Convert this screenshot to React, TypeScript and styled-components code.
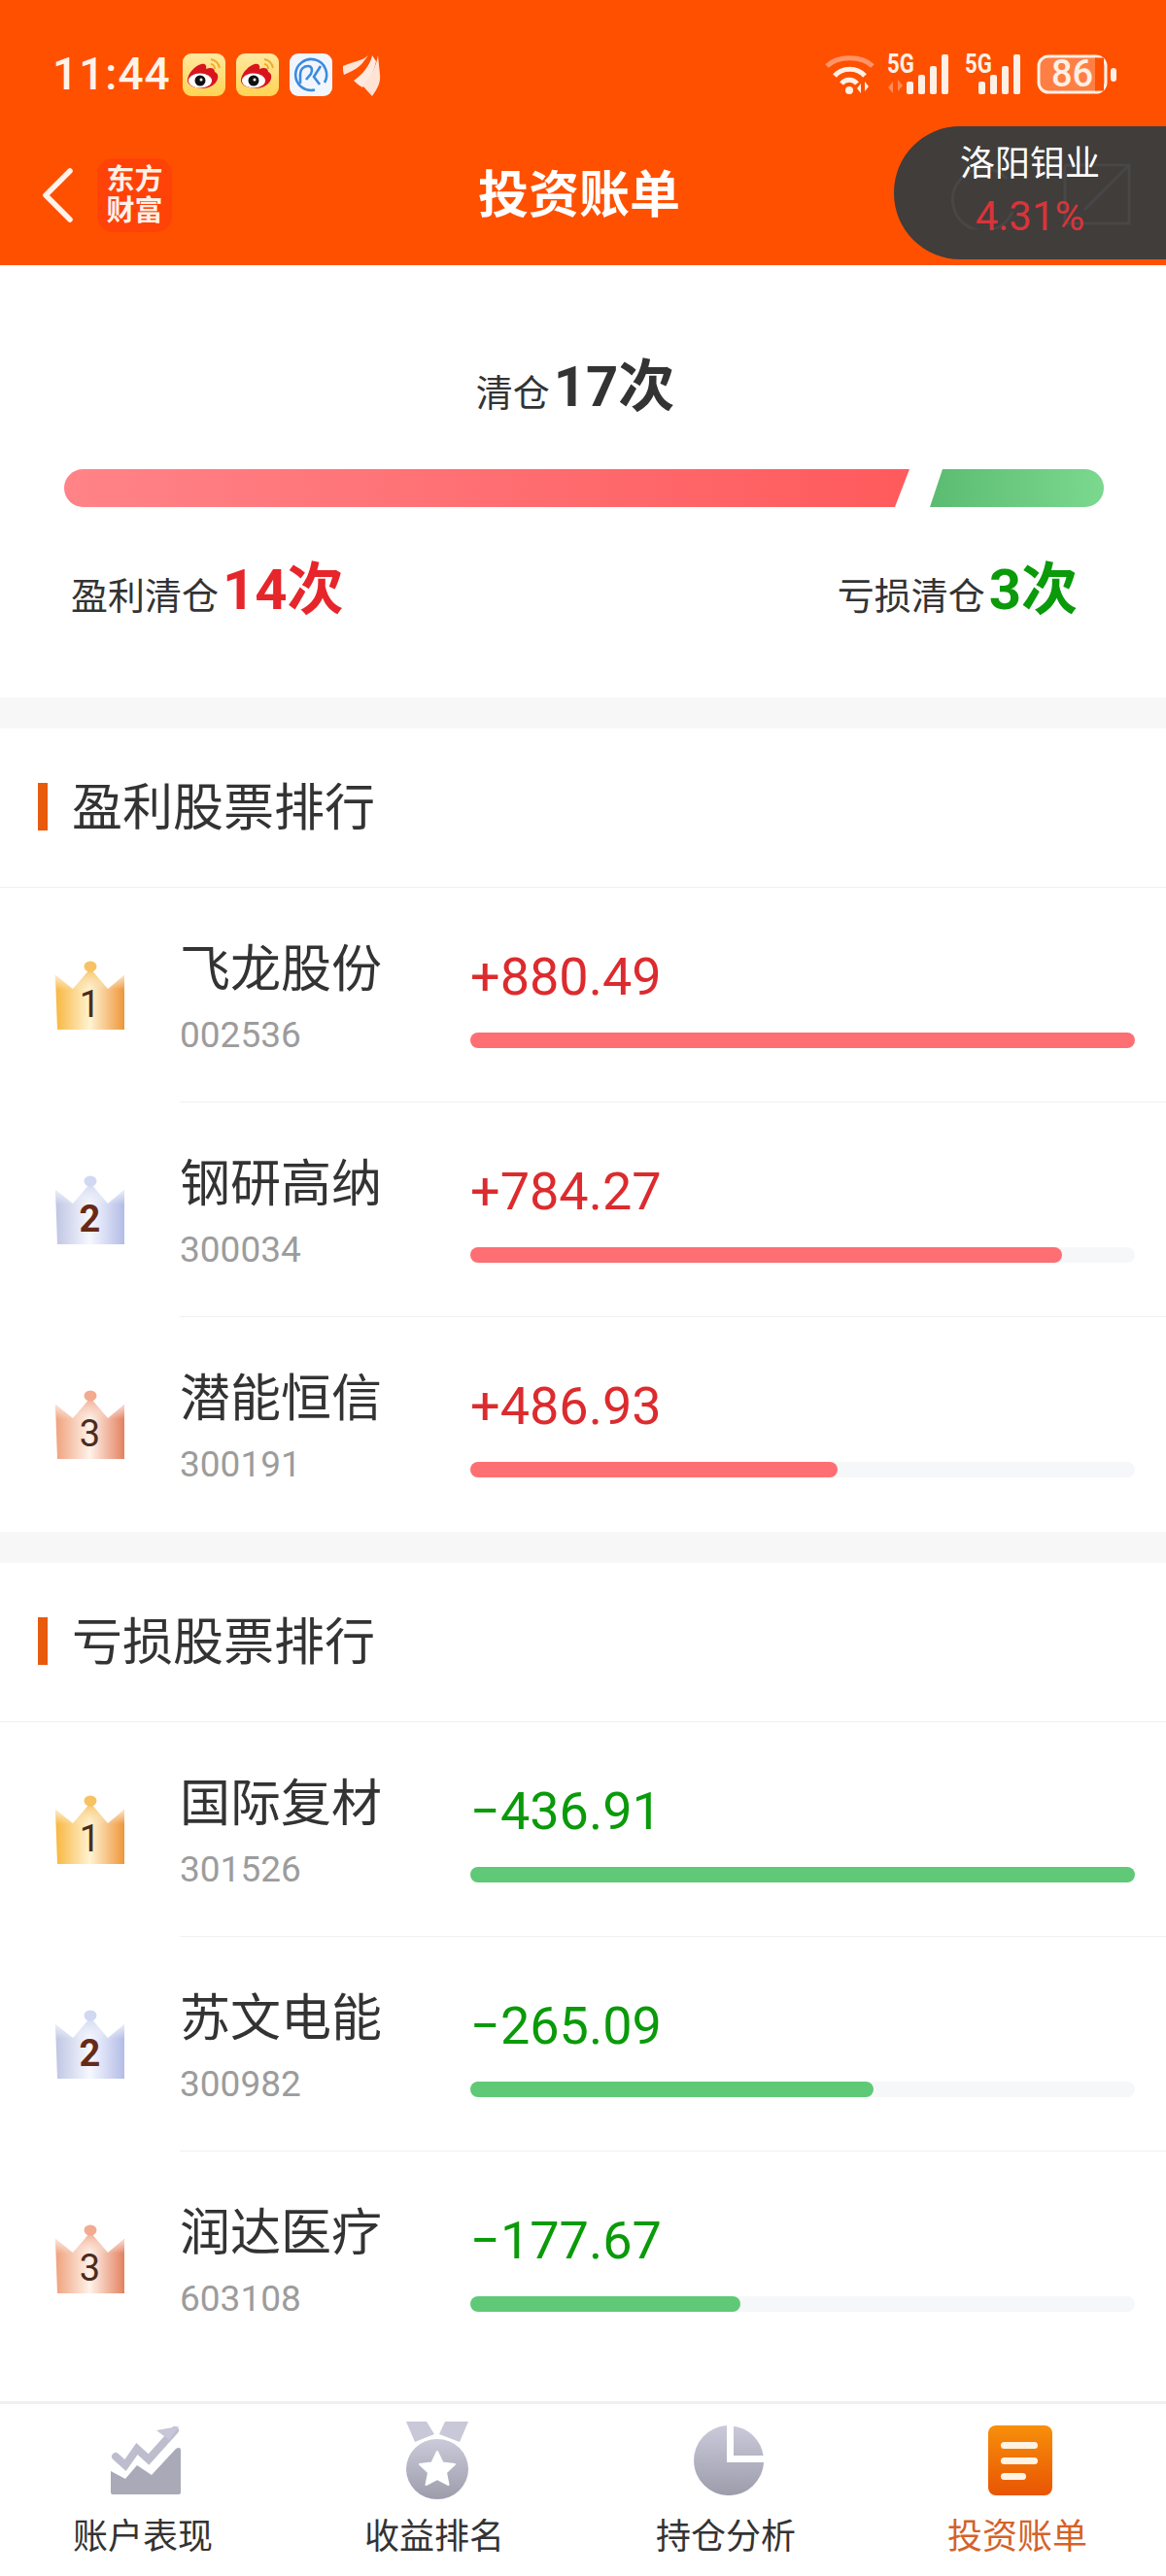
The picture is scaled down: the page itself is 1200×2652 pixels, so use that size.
import React from 'react';
import styled, { createGlobalStyle } from 'styled-components';

const FONT = 'Roboto, "Noto Sans CJK SC", sans-serif';

const GlobalStyle = createGlobalStyle`
  html, body {
    margin: 0;
    padding: 0;
    background: #ffffff;
  }
  * {
    box-sizing: border-box;
  }
`;

const Page = styled.div`
  position: relative;
  display: flex;
  flex-direction: column;
  width: 1200px;
  height: 2652px;
  overflow: hidden;
  background: #ffffff;
  color: #333333;
  font-family: ${FONT};
`;

const Header = styled.header`
  position: relative;
  flex: none;
  height: 273px;
  background: #ff5000;
`;

const StatusBar = styled.div`
  display: flex;
  align-items: flex-start;
  height: 130px;
  padding: 55px 51px 0 54px;
`;

const Time = styled.span`
  width: 134px;
  margin-top: -2px;
  color: #fff2e8;
  font-size: 46px;
  font-weight: 500;
  line-height: 46px;
  letter-spacing: 1px;
`;

const NotifyIcons = styled.div`
  display: flex;
  gap: 11px;
`;

const StatusIcons = styled.div`
  display: flex;
  align-items: flex-start;
  gap: 13px;
  margin-left: auto;
  margin-top: 1px;
`;

const SignalBox = styled.div`
  position: relative;
  height: 41px;
`;

const NetworkMark = styled.span`
  position: absolute;
  left: 0;
  top: 0;
  color: #fff0e6;
  font-size: 27px;
  font-weight: 700;
  line-height: 20px;
  transform: scaleX(0.82);
  transform-origin: left center;
`;

const BatteryBox = styled.div`
  position: relative;
  width: 82px;
  height: 41px;
`;

const BatteryLevel = styled.span`
  position: absolute;
  left: 2px;
  width: 69px;
  top: 0;
  color: #fff0e6;
  font-size: 38px;
  font-weight: 500;
  line-height: 41px;
  text-align: center;
`;

const NavBar = styled.div`
  position: relative;
  display: flex;
  align-items: center;
  height: 142px;
  padding-left: 43px;
`;

const AppLogo = styled.div`
  display: flex;
  flex-direction: column;
  align-items: center;
  justify-content: center;
  width: 77px;
  height: 76px;
  margin-left: 25px;
  border-radius: 16px;
  background: #ff4208;
  color: #fff1e8;
  font-size: 29px;
  font-weight: 700;
  line-height: 32px;
`;

const NavTitle = styled.h1`
  position: absolute;
  left: 492px;
  top: 42px;
  margin: 0;
  color: #ffffff;
  font-size: 52px;
  font-weight: 700;
  line-height: 60px;
`;

const FloatPill = styled.div`
  position: absolute;
  right: 0;
  top: 130px;
  display: flex;
  flex-direction: column;
  align-items: center;
  width: 280px;
  height: 137px;
  padding-top: 15px;
  border-radius: 68px 0 0 68px;
  background: #403d3b;
`;

const PillGhost = styled.svg`
  position: absolute;
  left: 56px;
  top: 36px;
`;

const PillName = styled.span`
  position: relative;
  color: #ffffff;
  font-size: 36px;
  line-height: 48px;
`;

const PillRate = styled.span`
  position: relative;
  margin-top: 6px;
  color: #d9343a;
  font-size: 42px;
  line-height: 48px;
`;

const Summary = styled.section`
  flex: none;
  height: 445px;
  padding-top: 90px;
`;

const SummaryTitle = styled.div`
  display: flex;
  justify-content: center;
  align-items: baseline;
  height: 70px;
  padding-right: 16px;
  line-height: 70px;
`;

const Label = styled.span`
  color: #333333;
  font-size: 38px;
`;

const Count = styled.strong<{ $tone: 'dark' | 'up' | 'down' }>`
  margin-left: 4px;
  color: ${(p) =>
    p.$tone === 'up' ? '#e6262a' : p.$tone === 'down' ? '#0a9a0a' : '#333333'};
  font-size: 58px;
  font-weight: 700;
`;

const RatioBar = styled.div`
  display: flex;
  height: 39px;
  margin: 50px 64px 0 66px;
`;

const RatioUp = styled.div`
  width: 870px;
  border-radius: 20px 0 0 20px;
  background: linear-gradient(90deg, #ff8388, #ff5a5c);
  clip-path: polygon(0 0, 100% 0, calc(100% - 15px) 100%, 0 100%);
`;

const RatioDown = styled.div`
  width: 179px;
  margin-left: 21px;
  border-radius: 0 20px 20px 0;
  background: linear-gradient(90deg, #5bbc71, #7bd88f);
  clip-path: polygon(13px 0, 100% 0, 100% 100%, 0 100%);
`;

const SummaryFoot = styled.div`
  display: flex;
  justify-content: space-between;
  align-items: baseline;
  height: 70px;
  margin-top: 50px;
  padding: 0 91px 0 73px;
  line-height: 70px;
`;

const FootItem = styled.div`
  display: flex;
  align-items: baseline;
`;

const Band = styled.div`
  flex: none;
  height: 32px;
  background: #f7f7f7;
`;

const SectionHead = styled.div`
  display: flex;
  align-items: center;
  height: 164px;
  padding: 0 0 2px 39px;
  border-bottom: 1px solid #f0f0f0;
`;

const Accent = styled.i`
  width: 10px;
  height: 49px;
  background: #e85a0c;
`;

const SectionTitle = styled.h2`
  margin: 5px 0 0 25px;
  color: #333333;
  font-size: 52px;
  font-weight: 400;
  line-height: 60px;
`;

const Row = styled.div`
  display: flex;
  height: 221px;
`;

const CrownBox = styled.div`
  position: relative;
  flex: none;
  width: 71px;
  height: 71px;
  margin: 75px 0 0 57px;
`;

const CrownNumber = styled.span<{ $rank: number }>`
  position: absolute;
  left: 0;
  right: 0;
  top: 24px;
  color: ${(p) => (p.$rank === 2 ? '#672a18' : '#4c2c20')};
  font-size: 38px;
  font-weight: ${(p) => (p.$rank === 2 ? 700 : 400)};
  line-height: 42px;
  text-align: center;
`;

const RowBody = styled.div<{ $last: boolean }>`
  display: flex;
  flex: 1;
  margin-left: 57px;
  padding-right: 32px;
  border-bottom: 1px solid ${(p) => (p.$last ? 'transparent' : '#f0f0f0')};
`;

const StockInfo = styled.div`
  flex: none;
  width: 299px;
  padding-top: 55px;
`;

const StockName = styled.div`
  color: #333333;
  font-size: 52px;
  line-height: 60px;
`;

const StockCode = styled.div`
  margin-top: 15px;
  color: #9c9c9c;
  font-size: 37px;
  line-height: 44px;
`;

const StockResult = styled.div`
  flex: 1;
  padding-top: 62px;
`;

const Amount = styled.div<{ $up: boolean }>`
  color: ${(p) => (p.$up ? '#dc2b2e' : '#0a9a0a')};
  font-size: 54px;
  line-height: 60px;
`;

const Track = styled.div`
  height: 16px;
  margin-top: 27px;
  border-radius: 8px;
  background: #f6f7f9;
`;

const Fill = styled.div<{ $up: boolean }>`
  height: 100%;
  border-radius: 8px;
  background: ${(p) => (p.$up ? '#fd6f73' : '#5fc977')};
`;

const TabBar = styled.nav`
  display: grid;
  grid-template-columns: repeat(4, 300px);
  flex: none;
  height: 180px;
  margin-top: auto;
  border-top: 3px solid #f0f0f0;
`;

const Tab = styled.div`
  display: flex;
  flex-direction: column;
  align-items: center;
  margin-left: -6px;
`;

const TabIcon = styled.div`
  display: flex;
  align-items: center;
  justify-content: center;
  height: 80px;
  margin: 18px 0 0 6px;
`;

const TabLabel = styled.span<{ $active: boolean }>`
  margin-top: 17px;
  color: ${(p) => (p.$active ? '#d4622a' : '#333333')};
  font-size: 36px;
  line-height: 44px;
`;

function WeiboIcon({ id }: { id: string }): React.ReactElement {
  return (
    <svg width="44" height="44" viewBox="0 0 44 44">
      <defs>
        <linearGradient id={id} x1="0" y1="0" x2="0" y2="1">
          <stop offset="0" stopColor="#ffe9a0" />
          <stop offset="1" stopColor="#ffd454" />
        </linearGradient>
      </defs>
      <rect width="44" height="44" rx="9" fill={`url(#${id})`} />
      <path
        d="M5 28c0-7 7-15 14-17 4-1 6 1 5 5 5-2 9-1 9 3 5 2 4 9-1 13-5 4-12 5-18 3-6-1-9-4-9-7z"
        fill="#d8151f"
      />
      <ellipse cx="18" cy="28" rx="12" ry="7.5" fill="#ffffff" />
      <circle cx="18" cy="28" r="5.5" fill="#111111" />
      <circle cx="19" cy="27" r="1.5" fill="#ffffff" />
      <path d="M29 6c5 1 8 4 9 9M29 11c2 0 4 2 4 5" fill="none" stroke="#efa92b" strokeWidth="2" />
    </svg>
  );
}

function LinkIcon(): React.ReactElement {
  return (
    <svg width="44" height="44" viewBox="0 0 44 44">
      <rect width="44" height="44" rx="9" fill="#f2f6fc" />
      <path d="M26 37.500A16 16 0 1 1 36 30" fill="none" stroke="#3c8be0" strokeWidth="2.600" />
      <path
        d="M11 31V21C11 16 15 13 19 13C23 13 24 17 22 21L17 27"
        fill="none"
        stroke="#3c8be0"
        strokeWidth="2.600"
      />
      <path d="M32 13L25 24L31 32" fill="none" stroke="#3c8be0" strokeWidth="2.600" />
    </svg>
  );
}

function FeatherIcon(): React.ReactElement {
  return (
    <svg width="39" height="44" viewBox="0 0 39 44">
      <path d="M26 2C20 8 8 9 0 13C0 17 0 20 1 22C8 19 16 15 20 10z" fill="#ffe4d6" />
      <path d="M30 2C28 12 20 22 11 28C14 31 17 33 20 35C27 28 32 18 34 8z" fill="#ffeadf" />
      <path d="M36 2C34 14 28 25 20 33C24 37 27 41 30 44C35 37 39 30 38 22z" fill="#ffe4d6" />
    </svg>
  );
}

function WifiIcon(): React.ReactElement {
  return (
    <svg width="51" height="41" viewBox="0 0 51 41">
      <path d="M2 12C13 1 38 1 49 12" fill="none" stroke="#ff9468" strokeWidth="5" />
      <path d="M10 22C18 13 33 13 41 22" fill="none" stroke="#fff0e6" strokeWidth="5" />
      <path d="M17 30C21 25 29 25 33 30" fill="none" stroke="#fff0e6" strokeWidth="5" />
      <circle cx="25" cy="37" r="4" fill="#fff0e6" />
      <path d="M37 40V30l-4 5zM41 28v10l4-5z" fill="#fff0e6" />
    </svg>
  );
}

function SignalIcon({ wide }: { wide: boolean }): React.ReactElement {
  const left = wide ? 20 : 14;
  const width = wide ? 67 : 61;
  const bars = [13, 20, 29, 41];
  return (
    <SignalBox>
      <svg width={width} height="41" viewBox={`0 0 ${width} 41`}>
        {wide && <path d="M6 40V28l-5 6zM11 26v12l5-6z" fill="#ff8a58" />}
        {bars.map((h, index) => (
          <rect key={h} x={left + index * 12} y={41 - h} width="7" height={h} rx="2" fill="#fff0e6" />
        ))}
      </svg>
      <NetworkMark>5G</NetworkMark>
    </SignalBox>
  );
}

function BatteryIcon(): React.ReactElement {
  return (
    <BatteryBox>
      <svg width="82" height="41" viewBox="0 0 82 41">
        <rect x="2" y="2" width="69" height="37" rx="10" fill="#ff7f43" stroke="#fff0e6" strokeWidth="3" />
        <rect x="60" y="3.500" width="9" height="34" fill="#ff5000" />
        <rect x="76" y="14" width="6" height="14" rx="3" fill="#fff0e6" />
      </svg>
      <BatteryLevel>86</BatteryLevel>
    </BatteryBox>
  );
}

function BackIcon(): React.ReactElement {
  return (
    <svg width="32" height="56" viewBox="0 0 32 56">
      <path
        d="M29 3L4 28l25 25"
        fill="none"
        stroke="#fff4ec"
        strokeWidth="5.500"
        strokeLinecap="round"
        strokeLinejoin="round"
      />
    </svg>
  );
}

const CROWN_COLORS: Record<number, string[]> = {
  1: ['#f8b63e', '#fff3d2', '#ee963a', '#f7c263'],
  2: ['#bfc5e3', '#f6f8ff', '#b3bce6', '#d1d8f1'],
  3: ['#efa17c', '#fff2e9', '#e38160', '#f2ab90'],
};

function Crown({ rank, id }: { rank: number; id: string }): React.ReactElement {
  const [edge, mid, end, ball] = CROWN_COLORS[rank];
  const shape = 'M0 15L18 29L36 9L54 29L71 15V71H2z';
  return (
    <CrownBox>
      <svg width="71" height="71" viewBox="0 0 71 71">
        <defs>
          <linearGradient id={`${id}-h`} x1="0" y1="0" x2="1" y2="0">
            <stop offset="0" stopColor={edge} />
            <stop offset="0.5" stopColor={mid} />
            <stop offset="1" stopColor={end} />
          </linearGradient>
          <linearGradient id={`${id}-v`} gradientUnits="userSpaceOnUse" x1="0" y1="12" x2="0" y2="30">
            <stop offset="0" stopColor="#ffffff" stopOpacity="0.9" />
            <stop offset="1" stopColor="#ffffff" stopOpacity="0" />
          </linearGradient>
          <linearGradient id={`${id}-p`} gradientUnits="userSpaceOnUse" x1="0" y1="8" x2="0" y2="30">
            <stop offset="0" stopColor={ball} stopOpacity="1" />
            <stop offset="1" stopColor={ball} stopOpacity="0" />
          </linearGradient>
        </defs>
        <path d={shape} fill={`url(#${id}-h)`} />
        <path d={shape} fill={`url(#${id}-v)`} />
        <path d="M36 8L18 29H54z" fill={`url(#${id}-p)`} />
        <ellipse cx="36" cy="6" rx="6.500" ry="5.500" fill={ball} />
      </svg>
      <CrownNumber $rank={rank}>{rank}</CrownNumber>
    </CrownBox>
  );
}

function ChartIcon(): React.ReactElement {
  return (
    <svg width="72" height="71" viewBox="0 0 72 71">
      <path
        d="M5 31l10 9 12-17 12 11 27-30"
        fill="none"
        stroke="#bdbdce"
        strokeWidth="8"
        strokeLinecap="round"
      />
      <path d="M47 4L70 0L60 14z" fill="#c6c6d6" />
      <path
        d="M0 46L15 54L27 40L42 50L67 23Q72 20 72 25V68Q72 70 70 70H2Q0 70 0 68z"
        fill="#a9a9b8"
      />
    </svg>
  );
}

function MedalIcon(): React.ReactElement {
  return (
    <svg width="64" height="80" viewBox="0 0 64 80">
      <defs>
        <linearGradient id="medal-grey" x1="0" y1="0" x2="0" y2="1">
          <stop offset="0" stopColor="#cacada" />
          <stop offset="1" stopColor="#9c9cab" />
        </linearGradient>
      </defs>
      <path d="M0 0H21L29 13L9 21zM40 0H64L55 21L34 13z" fill="#c8c8d8" />
      <ellipse cx="32" cy="49" rx="32" ry="31" fill="url(#medal-grey)" />
      <path
        d="M32 31l5.500 11.500 12.500 1.500-9 8.500 2.500 12.500-11.500-6-11.500 6 2.500-12.500-9-8.500 12.500-1.500z"
        fill="#ffffff"
        stroke="#ffffff"
        strokeWidth="2"
        strokeLinejoin="round"
      />
    </svg>
  );
}

function PieIcon(): React.ReactElement {
  return (
    <svg width="72" height="72" viewBox="0 0 72 72">
      <defs>
        <linearGradient id="pie-grey" gradientUnits="userSpaceOnUse" x1="0" y1="0" x2="0" y2="72">
          <stop offset="0" stopColor="#cacada" />
          <stop offset="1" stopColor="#9c9cab" />
        </linearGradient>
      </defs>
      <path d="M34 0.100V38H72A36 36 0 1 1 34 0.100Z" fill="url(#pie-grey)" />
      <path d="M41 0.700A36 36 0 0 1 71.600 31H41Z" fill="url(#pie-grey)" />
    </svg>
  );
}

function BillIcon(): React.ReactElement {
  return (
    <svg width="66" height="72" viewBox="0 0 66 72">
      <defs>
        <linearGradient id="bill-orange" x1="0" y1="0" x2="0" y2="1">
          <stop offset="0" stopColor="#f78f0a" />
          <stop offset="1" stopColor="#e95503" />
        </linearGradient>
      </defs>
      <rect width="66" height="72" rx="8" fill="url(#bill-orange)" />
      <rect x="13" y="17" width="38" height="7" rx="3.500" fill="#fff3e4" />
      <rect x="13" y="33" width="38" height="7" rx="3.500" fill="#fff3e4" />
      <rect x="13" y="49" width="26" height="7" rx="3.500" fill="#fff3e4" />
    </svg>
  );
}

type Stock = { name: string; code: string; amount: number };

const WINNERS: Stock[] = [
  { name: '飞龙股份', code: '002536', amount: 880.49 },
  { name: '钢研高纳', code: '300034', amount: 784.27 },
  { name: '潜能恒信', code: '300191', amount: 486.93 },
];

const LOSERS: Stock[] = [
  { name: '国际复材', code: '301526', amount: -436.91 },
  { name: '苏文电能', code: '300982', amount: -265.09 },
  { name: '润达医疗', code: '603108', amount: -177.67 },
];

const TABS = [
  { label: '账户表现', icon: <ChartIcon /> },
  { label: '收益排名', icon: <MedalIcon /> },
  { label: '持仓分析', icon: <PieIcon /> },
  { label: '投资账单', icon: <BillIcon />, active: true },
];

function RankSection({ title, stocks }: { title: string; stocks: Stock[] }): React.ReactElement {
  const top = Math.abs(stocks[0].amount);
  return (
    <section>
      <SectionHead>
        <Accent />
        <SectionTitle>{title}</SectionTitle>
      </SectionHead>
      {stocks.map((stock, index) => {
        const up = stock.amount > 0;
        return (
          <Row key={stock.code}>
            <Crown rank={index + 1} id={`crown-${stock.code}`} />
            <RowBody $last={index === stocks.length - 1}>
              <StockInfo>
                <StockName>{stock.name}</StockName>
                <StockCode>{stock.code}</StockCode>
              </StockInfo>
              <StockResult>
                <Amount $up={up}>
                  {up ? '+' : '−'}
                  {Math.abs(stock.amount).toFixed(2)}
                </Amount>
                <Track>
                  <Fill $up={up} style={{ width: `${(Math.abs(stock.amount) / top) * 100}%` }} />
                </Track>
              </StockResult>
            </RowBody>
          </Row>
        );
      })}
    </section>
  );
}

function App(): React.ReactElement {
  return (
    <Page>
      <GlobalStyle />
      <Header>
        <StatusBar>
          <Time>11:44</Time>
          <NotifyIcons>
            <WeiboIcon id="weibo-a" />
            <WeiboIcon id="weibo-b" />
            <LinkIcon />
            <FeatherIcon />
          </NotifyIcons>
          <StatusIcons>
            <WifiIcon />
            <SignalIcon wide />
            <SignalIcon wide={false} />
            <BatteryIcon />
          </StatusIcons>
        </StatusBar>
        <NavBar>
          <BackIcon />
          <AppLogo>
            <span>东方</span>
            <span>财富</span>
          </AppLogo>
          <NavTitle>投资账单</NavTitle>
        </NavBar>
        <FloatPill>
          <PillGhost width="190" height="70" viewBox="0 0 190 70" fill="none" stroke="#484747" strokeWidth="3">
            <path d="M60 18A32 32 0 1 0 66 52" />
            <path d="M120 4H186V64H120V4M186 4L140 50" />
          </PillGhost>
          <PillName>洛阳钼业</PillName>
          <PillRate>4.31%</PillRate>
        </FloatPill>
      </Header>

      <Summary>
        <SummaryTitle>
          <Label>清仓</Label>
          <Count $tone="dark">17次</Count>
        </SummaryTitle>
        <RatioBar>
          <RatioUp />
          <RatioDown />
        </RatioBar>
        <SummaryFoot>
          <FootItem>
            <Label>盈利清仓</Label>
            <Count $tone="up">14次</Count>
          </FootItem>
          <FootItem>
            <Label>亏损清仓</Label>
            <Count $tone="down">3次</Count>
          </FootItem>
        </SummaryFoot>
      </Summary>

      <Band />
      <RankSection title="盈利股票排行" stocks={WINNERS} />
      <Band />
      <RankSection title="亏损股票排行" stocks={LOSERS} />

      <TabBar>
        {TABS.map((tab) => (
          <Tab key={tab.label}>
            <TabIcon>{tab.icon}</TabIcon>
            <TabLabel $active={Boolean(tab.active)}>{tab.label}</TabLabel>
          </Tab>
        ))}
      </TabBar>
    </Page>
  );
}

export default App;
